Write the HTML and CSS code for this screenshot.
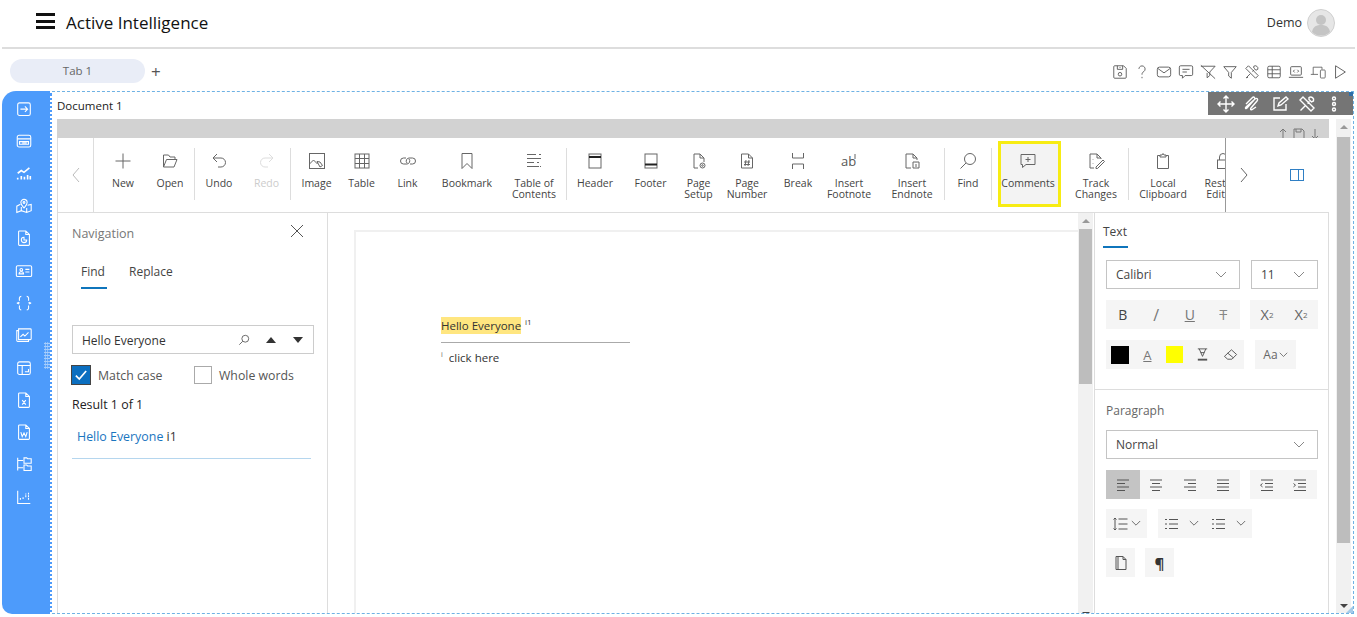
FILE: index.html
```html
<!DOCTYPE html>
<html lang="en">

<head>
    <meta charset="UTF-8">
    <meta name="viewport" content="width=device-width, initial-scale=1.0">
    <title>Active Intelligence - Document 1</title>
    <link rel="stylesheet" href="styles.css">
</head>

<body>
    <header class="app-header">
        <div class="menu-icon"><span></span><span></span><span></span></div>
        <div class="app-title">Active Intelligence</div>
        <div class="user-box">
            <span>Demo</span>
            <svg class="avatar" viewBox="0 0 28 28"><circle cx="14" cy="14" r="13.5" fill="#e6e6e6" stroke="#cfcfcf"/><circle cx="14" cy="11" r="5" fill="#c4c4c4" stroke="none"/><path d="M5 23c1-6 5-7 9-7s8 1 9 7a13 13 0 0 1-18 0z" fill="#c4c4c4" stroke="none"/></svg>
        </div>
    </header>

    <div class="tab-row">
        <div class="tab-pill">Tab 1</div>
        <div class="tab-add">+</div>
        <div class="page-tools">
            <svg viewBox="0 0 18 18"><path d="M3 2h10l3 3v10a1 1 0 0 1-1 1H3a1 1 0 0 1-1-1V3a1 1 0 0 1 1-1z"/><path d="M6 2v4h6V2M9 3.500v1"/><circle cx="9" cy="11.500" r="2"/></svg>
            <svg viewBox="0 0 18 18"><path d="M5.500 5.500a3.500 3.500 0 1 1 5.500 3c-1.500 1-2 1.700-2 3.500M9 14.500v1.500"/></svg>
            <svg viewBox="0 0 18 18"><rect x="1.500" y="3.500" width="15" height="11" rx="2.500"/><path d="M2 5l7 5 7-5"/></svg>
            <svg viewBox="0 0 18 18"><path d="M3 2h12a1.500 1.500 0 0 1 1.500 1.500v8A1.500 1.500 0 0 1 15 13H8l-3 3v-3H3a1.500 1.500 0 0 1-1.500-1.500v-8A1.500 1.500 0 0 1 3 2z"/><path d="M5 6h8M5 9h5"/></svg>
            <svg viewBox="0 0 18 18"><path d="M1 2.500h16l-6 6.500v4l-3 2.500V10M1 1.500l16 15"/></svg>
            <svg viewBox="0 0 18 18"><path d="M2 3h14l-5.500 6.500V16l-3-2.500v-4z"/></svg>
            <svg viewBox="0 0 18 18"><path d="M2 5l3-3 11 11-3 3zM11 2.500a3 3 0 0 1 4.500 3.500l-2 1-2.500-2.500zM2.500 15.500l4.500-4.500M2.500 15.500l2-.5M9.500 8.500l2-2"/></svg>
            <svg viewBox="0 0 18 18"><rect x="2" y="2.500" width="14" height="13" rx="1.500"/><path d="M2 6.500h14M2 11h14M7 2.500v13"/></svg>
            <svg viewBox="0 0 18 18"><rect x="3" y="3" width="12" height="9.500" rx="1"/><path d="M1 15h16M7.500 6.500l-1.500 1.500 1.500 1.500M10.500 6.500l1.500 1.500-1.500 1.500"/></svg>
            <svg viewBox="0 0 20 18"><path d="M1 12h9M4 12V3h11v3"/><rect x="13" y="6.500" width="6" height="10" rx="1"/></svg>
            <svg viewBox="0 0 18 18"><path d="M4 2l11 7-11 7z"/></svg>
        </div>
    </div>

    <div class="workspace">
        <nav class="side-nav">
            <svg viewBox="0 0 20 20"><rect x="3" y="3" width="14" height="14" rx="2"/><path d="M6 10h8M11 7l3 3-3 3"/></svg>
            <svg viewBox="0 0 20 20"><rect x="2.500" y="3.500" width="15" height="13" rx="2"/><path d="M2.500 7.500h15M5 10.500h10v3H5zM8 12h5"/></svg>
            <svg viewBox="0 0 20 20"><path d="M3 9l4-3 3 2 6-5M3 16v-2M7 16v-4M10.500 16v-3M14 16v-5M17 16v-4" stroke-width="1.800"/></svg>
            <svg viewBox="0 0 20 20"><path d="M6 8l-4 2v7l5-2 6 2 5-2V8l-4 1M10 12c-2-2.500-3.500-4-3.500-6a3.500 3.500 0 0 1 7 0c0 2-1.500 3.500-3.500 6zM7 15v-4M13 17v-5"/><circle cx="10" cy="6" r="1"/></svg>
            <svg viewBox="0 0 20 20"><path d="M5 2h7l4 4v11a1 1 0 0 1-1 1H5a1 1 0 0 1-1-1V3a1 1 0 0 1 1-1zM12 2v4h4"/><path d="M13 12a3 3 0 1 1-3-3v3z"/></svg>
            <svg viewBox="0 0 20 20"><rect x="1.500" y="4" width="17" height="12" rx="1.500"/><circle cx="7" cy="8.500" r="1.500"/><path d="M4.500 13c0-3 5-3 5 0zM11.500 8h4.500M11.500 11h4.500"/></svg>
            <svg viewBox="0 0 20 20"><path d="M7 2.500c-3 0-2 3.500-2 5.500s-3 2-3 2 3 0 3 2-1 5.500 2 5.500M13 2.500c3 0 2 3.500 2 5.500s3 2 3 2-3 0-3 2 1 5.500-2 5.500" stroke-dasharray="6 1.500"/></svg>
            <svg viewBox="0 0 20 20"><path d="M4 3h13a1 1 0 0 1 1 1v10a1 1 0 0 1-1 1H4zM4 5H2v11a1 1 0 0 0 1 1h12v-2M6 12l3-3 2 2 4-4"/></svg>
            <svg viewBox="0 0 20 20"><rect x="3" y="3" width="14" height="14" rx="2"/><path d="M3 7h14M8 7v10M11 14h4v-3"/></svg>
            <svg viewBox="0 0 20 20"><path d="M5 2h7l4 4v11a1 1 0 0 1-1 1H5a1 1 0 0 1-1-1V3a1 1 0 0 1 1-1zM12 2v4h4M8 10l4 5M12 10l-4 5"/></svg>
            <svg viewBox="0 0 20 20"><path d="M5 2h7l4 4v11a1 1 0 0 1-1 1H5a1 1 0 0 1-1-1V3a1 1 0 0 1 1-1zM12 2v4h4M6.500 10l1.500 5 2-4 2 4 1.500-5"/></svg>
            <svg viewBox="0 0 20 20"><path d="M3 3v14M3 6h6M3 14h6M10 3h3l1 1h4v5h-8zM10 11h3l1 1h4v5h-8z"/></svg>
            <svg viewBox="0 0 20 20"><path d="M3 3v14h14"/><path d="M6 13v-2M9 12V9M12 10V6M15 13V4" stroke-dasharray="2 1"/></svg>
        </nav>

        <section class="widget">
            <div class="widget-title">Document 1</div>
            <div class="widget-body">
                <div class="editor">
                    <div class="grey-bar">
                        <svg viewBox="0 0 14 14"><path d="M7 12V2M4 5l3-3 3 3M2 13h10"/></svg>
                        <svg viewBox="0 0 14 14"><path d="M2 2h8l2 2v8H2zM4 2v3h5V2"/></svg>
                        <svg viewBox="0 0 14 14"><path d="M7 2v10M4 9l3 3 3-3M2 13h10"/></svg>
                    </div>

                    <div class="ribbon">
                        <div class="ribbon-prev"><svg viewBox="0 0 12 18"><path d="M9 2L3 9l6 7"/></svg></div>
                        <div class="ribbon-items">
                            <div class="rb rb-new"><svg viewBox="0 0 18 18"><path d="M9 1.500v15M1.500 9h15"/></svg><span>New</span></div>
                            <div class="rb rb-open"><svg viewBox="0 0 18 18"><path d="M2.500 15V3h5l1.500 2h5v2.500M2.500 15l3-7.500h10.500l-3 7.500z"/></svg><span>Open</span></div>
                            <i class="rb-sep"></i>
                            <div class="rb rb-undo"><svg viewBox="0 0 18 18"><path d="M7 2L3 6l4 4M3 6h8a4.500 4.500 0 0 1 0 9H8"/></svg><span>Undo</span></div>
                            <div class="rb rb-redo off"><svg viewBox="0 0 18 18"><path d="M11 2l4 4-4 4M15 6H7a4.500 4.500 0 0 0 0 9h3"/></svg><span>Redo</span></div>
                            <i class="rb-sep"></i>
                            <div class="rb rb-image"><svg viewBox="0 0 18 18"><rect x="1.500" y="1.500" width="15" height="15"/><path d="M1.500 12l4-4 4 4M9 9.500l3 .5 2.500 3.500-2.500 1.500z"/></svg><span>Image</span></div>
                            <div class="rb rb-table"><svg viewBox="0 0 18 18"><rect x="2" y="2" width="14" height="14"/><path d="M2 6.500h14M2 11.500h14M6.500 2v14M11.500 2v14"/></svg><span>Table</span></div>
                            <div class="rb rb-link"><svg viewBox="0 0 18 18"><path d="M7 6H4.500a3 3 0 0 0 0 6H8a3 3 0 0 0 2-5M11 12h2.500a3 3 0 0 0 0-6H10a3 3 0 0 0-2 5"/></svg><span>Link</span></div>
                            <div class="rb rb-mark"><svg viewBox="0 0 18 18"><path d="M4 1.500h10v15l-5-5-5 5z"/></svg><span>Bookmark</span></div>
                            <div class="rb rb-toc"><svg viewBox="0 0 18 18"><path d="M2 2.500h9M14 2.500h2M2 6.500h14M2 10.500h7M12 10.500h2M2 14.500h12M15 14.500h1"/></svg><span>Table of Contents</span></div>
                            <i class="rb-sep"></i>
                            <div class="rb rb-header"><svg viewBox="0 0 18 18"><rect x="3" y="2" width="12" height="14"/><rect x="3" y="4" width="12" height="2" class="solid"/></svg><span>Header</span></div>
                            <div class="rb rb-footer"><svg viewBox="0 0 18 18"><rect x="3" y="2" width="12" height="14"/><rect x="3" y="11.500" width="12" height="2" class="solid"/></svg><span>Footer</span></div>
                            <div class="rb rb-setup"><svg viewBox="0 0 18 18"><path d="M8 16H4V2h6l4 4v4M10 2v4h4"/><circle cx="12.500" cy="13.500" r="2.500"/><circle cx="12.500" cy="13.500" r=".8"/></svg><span>Page Setup</span></div>
                            <div class="rb rb-number"><svg viewBox="0 0 18 18"><path d="M3.500 16V2h7l4 4v10zM10.500 2v4h4M8 8l-1 6M11 8l-1 6M6 10h6M6 12.500h6"/></svg><span>Page Number</span></div>
                            <div class="rb rb-break"><svg viewBox="0 0 18 18"><path d="M3.500 1v5h11V1M3.500 17v-5h11v5"/></svg><span>Break</span></div>
                            <div class="rb rb-foot"><svg viewBox="0 0 18 18"><text x="1" y="14" class="ico-text">ab</text><path d="M15 2v5"/></svg><span>Insert Footnote</span></div>
                            <div class="rb rb-end"><svg viewBox="0 0 18 18"><path d="M8 16H3V2h7l4 4v2M10 2v4h4M10 10h6v6h-6zM13 12v3M13 10.800v.2"/></svg><span>Insert Endnote</span></div>
                            <i class="rb-sep"></i>
                            <div class="rb rb-find"><svg viewBox="0 0 18 18"><circle cx="11" cy="7" r="5.500"/><path d="M7 11l-5.500 5.500"/></svg><span>Find</span></div>
                            <i class="rb-sep"></i>
                            <div class="rb rb-comments"><svg viewBox="0 0 18 18"><path d="M2 2.500h14v10H7l-3.500 3v-3H2zM9 5v5M6.500 7.500h5"/></svg><span>Comments</span></div>
                            <div class="rb rb-track"><svg viewBox="0 0 18 18"><path d="M7 16H3V2h7l4 4v1M10 2v4h4M6 7v.5M6 11v.5M9 15l7-7 1.500 1.500-7 7H9z"/></svg><span>Track Changes</span></div>
                            <i class="rb-sep"></i>
                            <div class="rb rb-clip"><svg viewBox="0 0 18 18"><path d="M6 3.500H3.500v13h11v-13H12M6 5V3h2l1-1.500L10 3h2v2z"/></svg><span>Local Clipboard</span></div>
                            <div class="rb rb-lock"><svg viewBox="0 0 18 18"><rect x="3.500" y="8" width="11" height="8.500"/><path d="M5.500 8V5a3.500 3.500 0 0 1 7 0v3"/></svg><span>Restrict Editing</span></div>
                        </div>
                        <div class="ribbon-next">
                            <svg class="next-arrow" viewBox="0 0 12 18"><path d="M3 2l6 7-6 7"/></svg>
                            <svg class="panel-toggle" viewBox="0 0 16 14"><rect x="1.500" y="1.500" width="13" height="11"/><path d="M9.500 1.500v11"/></svg>
                        </div>
                    </div>

                    <div class="editor-body">
                        <aside class="find-pane">
                            <div class="pane-head">
                                <span>Navigation</span>
                                <svg viewBox="0 0 14 14"><path d="M1 1l12 12M13 1L1 13"/></svg>
                            </div>
                            <div class="find-tabs">
                                <span class="active">Find</span>
                                <span>Replace</span>
                            </div>
                            <div class="find-input">
                                <span>Hello Everyone</span>
                                <svg class="find-glass" viewBox="0 0 14 14"><circle cx="8.500" cy="5.500" r="4"/><path d="M5.500 8.500L1.500 12.500"/></svg>
                                <i class="tri-up"></i>
                                <i class="tri-down"></i>
                            </div>
                            <div class="find-options">
                                <label class="opt">
                                    <span class="checkbox checked"><svg viewBox="0 0 14 14"><path d="M2.500 7.500l3 3 6-7"/></svg></span>
                                    Match case
                                </label>
                                <label class="opt">
                                    <span class="checkbox"></span>
                                    Whole words
                                </label>
                            </div>
                            <div class="find-count">Result 1 of 1</div>
                            <div class="find-result"><a>Hello Everyone</a> i1</div>
                        </aside>

                        <main class="doc-area">
                            <div class="doc-page">
                                <p class="doc-line"><mark>Hello Everyone</mark> <sup>i1</sup></p>
                                <hr class="note-rule">
                                <p class="doc-note"><sup>i</sup>click here</p>
                            </div>
                            <div class="doc-scroll">
                                <i class="arrow-up"></i>
                                <div class="doc-thumb"></div>
                                <i class="arrow-down"></i>
                            </div>
                        </main>

                        <aside class="props-pane">
                            <div class="props-text">
                                <div class="props-tab">Text</div>
                                <div class="tool-row select-row">
                                    <div class="select sel-font">Calibri<svg viewBox="0 0 12 8"><path d="M1 1l5 5 5-5"/></svg></div>
                                    <div class="select sel-size">11<svg viewBox="0 0 12 8"><path d="M1 1l5 5 5-5"/></svg></div>
                                </div>
                                <div class="tool-row">
                                    <div class="tools">
                                        <b class="tool t-b">B</b>
                                        <em class="tool t-b t-i">/</em>
                                        <u class="tool t-b t-u">U</u>
                                        <s class="tool t-b t-s">T</s>
                                    </div>
                                    <div class="tools">
                                        <span class="tool t-sc">X<sup>2</sup></span>
                                        <span class="tool t-sc">X<sub>2</sub></span>
                                    </div>
                                </div>
                                <div class="tool-row">
                                    <div class="tools">
                                        <span class="tool t-cell"><i class="swatch-black"></i></span>
                                        <span class="tool t-cell t-col"><u>A</u></span>
                                        <span class="tool t-cell"><i class="swatch-yellow"></i></span>
                                        <span class="tool t-cell"><svg viewBox="0 0 16 16"><path d="M3 2h10M4.500 2L8 10l3.500-8M6 6h4"/><path d="M3 13.500h10" stroke-width="2"/></svg></span>
                                        <span class="tool t-cell"><svg viewBox="0 0 16 16"><path d="M1.500 10L9 3l5.500 5-5 5H5zM5 6.500l6 5"/></svg></span>
                                    </div>
                                    <div class="tools tools-case">
                                        <span class="tool t-case">Aa<svg viewBox="0 0 12 8"><path d="M1 1l5 5 5-5"/></svg></span>
                                    </div>
                                </div>
                            </div>
                            <div class="props-para">
                                <div class="props-label">Paragraph</div>
                                <div class="select sel-style">Normal<svg viewBox="0 0 12 8"><path d="M1 1l5 5 5-5"/></svg></div>
                                <div class="tool-row">
                                    <div class="tools">
                                        <span class="tool on"><svg viewBox="0 0 16 16"><path d="M2 3h12M2 6.500h8M2 10h12M2 13.500h8"/></svg></span>
                                        <span class="tool"><svg viewBox="0 0 16 16"><path d="M2 3h12M4 6.500h8M2 10h12M4 13.500h8"/></svg></span>
                                        <span class="tool"><svg viewBox="0 0 16 16"><path d="M2 3h12M6 6.500h8M2 10h12M6 13.500h8"/></svg></span>
                                        <span class="tool"><svg viewBox="0 0 16 16"><path d="M2 3h12M2 6.500h12M2 10h12M2 13.500h12"/></svg></span>
                                    </div>
                                    <div class="tools">
                                        <span class="tool"><svg viewBox="0 0 16 16"><path d="M2 3h12M6 6.500h8M6 10h8M2 13.500h12M3.500 6.500L1.500 8.200l2 1.700"/></svg></span>
                                        <span class="tool"><svg viewBox="0 0 16 16"><path d="M2 3h12M6 6.500h8M6 10h8M2 13.500h12M1.500 6.500l2 1.700-2 1.700"/></svg></span>
                                    </div>
                                </div>
                                <div class="tool-row list-row">
                                    <div class="tools">
                                        <span class="tool t-wide"><svg viewBox="0 0 16 16"><path d="M3 2v12M1.500 3.500L3 2l1.500 1.500M1.500 12.500L3 14l1.500-1.500M6.500 3h9M6.500 8h9M6.500 13h9"/></svg><svg class="mini" viewBox="0 0 12 8"><path d="M1 1l5 5 5-5"/></svg></span>
                                    </div>
                                    <div class="tools">
                                        <span class="tool t-list"><svg viewBox="0 0 16 16"><path d="M5 3.500h9M5 8h9M5 12.500h9M1 3.500h2M1 8h2M1 12.500h2"/></svg><svg class="mini" viewBox="0 0 12 8"><path d="M1 1l5 5 5-5"/></svg></span>
                                        <span class="tool t-list"><svg viewBox="0 0 16 16"><path d="M5 3.500h9M5 8h9M5 12.500h9M1 3.500h2M1 8h2M1 12.500h2"/></svg><svg class="mini" viewBox="0 0 12 8"><path d="M1 1l5 5 5-5"/></svg></span>
                                    </div>
                                </div>
                                <div class="tool-row">
                                    <div class="tools"><span class="tool t-square"><svg viewBox="0 0 16 16"><path d="M3 1.500h7l3 3v10H3zM10 1.500v3h3M5 1.500v13"/></svg></span></div>
                                    <div class="tools"><span class="tool t-square t-para">¶</span></div>
                                </div>
                            </div>
                        </aside>
                    </div>
                </div>

                <div class="outer-scroll">
                    <i class="arrow-up"></i>
                    <div class="outer-thumb"></div>
                    <i class="arrow-down"></i>
                </div>
            </div>

            <!-- floating widget tools -->
            <div class="widget-tools">
                <svg viewBox="0 0 18 18"><path d="M9 1v16M1 9h16M6.500 3.500L9 1l2.500 2.500M6.500 14.500L9 17l2.500-2.500M3.500 6.500L1 9l2.500 2.500M14.500 6.500L17 9l-2.500 2.500"/></svg>
                <svg viewBox="0 0 18 18"><path d="M2 9l6-6c2-2 4 0 2 2l-7 8c-1.500 1.500-2 0-1-1l9-8c2-1.500 3.500 0 2 2l-6 7c-1 1.500 0 2.500 2 1l3-2"/></svg>
                <svg viewBox="0 0 18 18"><path d="M9 3H3v12h12V9M7 11l1-3 7-6 2 2-7 6z"/></svg>
                <svg viewBox="0 0 18 18"><path d="M2 5l3-3 11 11-3 3zM11 2.500a3 3 0 0 1 4.500 3.500l-2 1-2.500-2.500zM2.500 15.500l4.500-4.500M9.500 8.500l2-2"/></svg>
                <svg viewBox="0 0 18 18"><circle cx="9" cy="3.500" r="1.500"/><circle cx="9" cy="9" r="1.500"/><circle cx="9" cy="14.500" r="1.500"/></svg>
            </div>
            <i class="corner-mark"></i>
            <i class="resize-mark"></i>
        </section>

        <div class="drag-dots"></div>
    </div>
</body>

</html>
```

FILE: styles.css
```css
body {
    font-family: "Open Sans", sans-serif;
    margin: 0;
    padding: 0;
    width: 1357px;
    height: 617px;
    overflow: hidden;
    background-color: white;
    color: #333;
    font-size: 12px;
}

svg {
    fill: none;
    stroke: #555;
    stroke-width: 1;
}

/* header */
.app-header {
    display: flex;
    align-items: center;
    height: 49px;
    margin: 0 2px;
    padding: 0 20px 2px 34px;
    box-sizing: border-box;
    border-bottom: 2px solid #ddd;
}

.menu-icon {
    display: flex;
    flex-direction: column;
    justify-content: space-between;
    width: 19px;
    height: 16px;
    margin: 0 11px 3px 0;
}

.menu-icon span {
    display: block;
    height: 3px;
    background-color: #111;
}

.app-title {
    font-size: 17px;
    color: #111;
}

.user-box {
    display: flex;
    align-items: center;
    gap: 5px;
    margin-left: auto;
    font-size: 12.5px;
}

.avatar {
    width: 28px;
    height: 28px;
}

/* tabs */
.tab-row {
    display: flex;
    align-items: center;
    height: 42px;
    padding: 0 9px 0 10px;
}

.tab-pill {
    width: 135px;
    height: 24px;
    line-height: 23px;
    text-align: center;
    box-sizing: border-box;
    background-color: #e9edf7;
    border-radius: 12px;
    color: #666;
    margin-top: 2px;
    font-size: 11.5px;
}

.tab-add {
    margin-left: 6px;
    margin-top: 2px;
    font-size: 17px;
    color: #555;
}

.page-tools {
    display: flex;
    align-items: center;
    gap: 6px;
    margin-left: auto;
    margin-top: 3px;
}

.page-tools svg {
    width: 16px;
    height: 16px;
}

/* main area */
.workspace {
    position: relative;
    display: flex;
    height: 523px;
    margin: 0 3px 0 2px;
}

.side-nav {
    display: flex;
    flex-direction: column;
    align-items: center;
    width: 44px;
    padding: 2px 4px 0 0;
    flex-shrink: 0;
    background-color: #4d9bfb;
    border-right: 2px dotted white;
    border-radius: 14px 0 0 10px;
}

.side-nav svg {
    width: 18px;
    height: 18px;
    padding: 7.16px 0;
    stroke: white;
    stroke-width: 1.2;
}

.drag-dots {
    position: absolute;
    left: 42px;
    top: 251px;
    width: 6px;
    height: 27px;
    background-image: radial-gradient(#a6cdfb 1px, transparent 1px);
    background-size: 2.500px 3px;
}

.widget {
    position: relative;
    flex: 1;
    min-width: 0;
    box-sizing: border-box;
    padding-left: 5px;
    border-top: 1px dashed #6fb2e4;
    border-right: 1px dashed #6fb2e4;
    border-bottom: 1px dashed #6fb2e4;
}

.widget-title {
    height: 27px;
    line-height: 27px;
    font-size: 11.5px;
    color: #222;
}

.widget-body {
    display: flex;
    height: 494px;
}

.editor {
    width: 1272px;
    display: flex;
    flex-direction: column;
    flex-shrink: 0;
}

.grey-bar {
    display: flex;
    justify-content: flex-end;
    align-items: flex-start;
    gap: 2px;
    height: 19px;
    padding: 8px 7px 0 0;
    box-sizing: border-box;
    overflow: hidden;
    background-color: #d2d2d2;
}

.grey-bar svg {
    width: 14px;
    height: 14px;
    stroke: #777;
}

/* ribbon */
.ribbon {
    display: flex;
    height: 75px;
    box-sizing: border-box;
    border-bottom: 1px solid #ddd;
    border-left: 1px solid #ddd;
    flex-shrink: 0;
}

.ribbon-prev {
    display: flex;
    align-items: center;
    justify-content: center;
    width: 35px;
    flex-shrink: 0;
    border-right: 1px solid #ddd;
}

.ribbon-prev svg {
    width: 12px;
    height: 18px;
    stroke: #bbb;
}

.ribbon-items {
    display: flex;
    flex: 1;
    min-width: 0;
    overflow: hidden;
    padding-left: 6px;
}

.ribbon-next {
    display: flex;
    align-items: center;
    width: 103px;
    flex-shrink: 0;
    border-left: 1px solid #999;
}

.next-arrow {
    width: 12px;
    height: 18px;
    margin-left: 12px;
    stroke: #666;
}

.panel-toggle {
    width: 16px;
    height: 14px;
    margin-left: 39px;
    stroke: #2f7fc4;
}

.rb {
    display: flex;
    flex-direction: column;
    align-items: center;
    flex-shrink: 0;
    padding-top: 14px;
    box-sizing: border-box;
    text-align: center;
    font-size: 10.5px;
    line-height: 11px;
    color: #444;
}

.rb svg {
    width: 18px;
    height: 18px;
    margin-bottom: 8px;
    stroke: #666;
}

.rb.off,
.rb.off svg {
    color: #ccc;
    stroke: #ddd;
}

.rb-sep {
    display: block;
    width: 1px;
    height: 52px;
    margin-top: 10px;
    flex-shrink: 0;
    background-color: #ddd;
}

.solid {
    fill: #222;
    stroke: none;
}

.ico-text {
    font-family: "Open Sans", sans-serif;
    font-size: 13px;
    fill: #555;
    stroke: none;
}

.rb-new { width: 46px; }
.rb-open { width: 48px; }
.rb-undo { width: 48px; }
.rb-redo { width: 47px; }
.rb-image { width: 49px; padding-left: 2px; }
.rb-table { width: 43px; }
.rb-link { width: 49px; }
.rb-mark { width: 70px; }
.rb-toc { width: 64px; }
.rb-header { width: 56px; }
.rb-footer { width: 55px; }
.rb-setup { width: 41px; }
.rb-number { width: 56px; }
.rb-break { width: 46px; }
.rb-foot { width: 56px; }
.rb-end { width: 67px; padding-left: 3px; }
.rb-find { width: 46px; }
.rb-track { width: 64px; margin-left: 3px; }
.rb-clip { width: 68px; }
.rb-lock { width: 52px; }

.rb-comments {
    width: 63px;
    height: 66px;
    margin: 3px 0 0 6px;
    padding: 8px 3px 0 0;
    border: 3px solid #f7ec13;
    background-color: #f3f3f3;
}

/* editor body */
.editor-body {
    display: flex;
    flex: 1;
    min-height: 0;
    border-left: 1px solid #ddd;
}

.find-pane {
    width: 255px;
    padding: 0 0 0 14px;
    flex-shrink: 0;
    border-right: 1px solid #ddd;
}

.pane-head {
    display: flex;
    justify-content: space-between;
    align-items: center;
    width: 232px;
    height: 40px;
    font-size: 12.5px;
    color: #777;
}

.pane-head svg {
    width: 14px;
    height: 14px;
    margin-bottom: 4px;
}

.find-tabs {
    display: flex;
    gap: 22px;
    margin: 0 0 36px 9px;
    font-size: 12px;
    color: #444;
}

.find-tabs span {
    height: 36px;
    padding-top: 10px;
    box-sizing: border-box;
}

.find-tabs .active {
    width: 26px;
    border-bottom: 2px solid #0f75bc;
}

.find-input {
    display: flex;
    align-items: center;
    width: 242px;
    height: 29px;
    box-sizing: border-box;
    padding: 2px 10px 0 9px;
    border: 1px solid #ccc;
    color: #333;
}

.find-glass {
    width: 12px;
    height: 12px;
    margin-left: auto;
    margin-right: 16px;
    margin-bottom: 2px;
}

.tri-up,
.tri-down {
    display: block;
    width: 0;
    height: 0;
    margin-bottom: 2px;
    border-left: 5px solid transparent;
    border-right: 5px solid transparent;
}

.tri-up {
    border-bottom: 6px solid #333;
    margin-right: 17px;
}

.tri-down {
    border-top: 6px solid #333;
}

.find-options {
    display: flex;
    margin: 11px 0 0 -1px;
    color: #555;
    font-size: 12.3px;
}

.opt {
    display: flex;
    align-items: center;
    gap: 7px;
    width: 123px;
}

.checkbox {
    display: block;
    width: 18px;
    height: 18px;
    box-sizing: border-box;
    border: 1px solid #aaa;
}

.checkbox.checked {
    width: 20px;
    height: 20px;
    padding: 1px;
    background-color: #0b6fc0;
    border: 1px solid #444;
}

.checkbox svg {
    display: block;
    width: 16px;
    height: 16px;
    stroke: white;
    stroke-width: 1.5;
}

.find-count {
    margin-top: 11px;
    line-height: 17px;
    font-size: 12.4px;
    color: #222;
}

.find-result {
    width: 234px;
    margin-top: 15px;
    padding: 0 0 13px 5px;
    line-height: 17px;
    font-size: 12.4px;
    border-bottom: 1px solid #b5d6ee;
}

.find-result a {
    color: #1a76bf;
}

/* document */
.doc-area {
    display: flex;
    width: 766px;
    flex-shrink: 0;
    box-sizing: border-box;
}

.doc-page {
    flex: 1;
    margin: 17px 0 0 26px;
    padding: 85px 0 0 85px;
    border-top: 2px solid #f0f0f0;
    border-left: 2px solid #f0f0f0;
}

.doc-line {
    margin: 0;
    line-height: 17px;
    font-size: 11.5px;
}

.doc-line mark {
    display: inline-block;
    width: 80px;
    white-space: nowrap;
    background-color: #ffe680;
    color: #333;
}

.doc-line sup {
    font-size: 8px;
    line-height: 0;
    margin-left: 1px;
}

.note-rule {
    width: 189px;
    height: 1px;
    margin: 8px 0 0 0;
    border: none;
    background-color: #aaa;
}

.doc-note {
    margin: 6px 0 0 0;
    font-size: 11.5px;
    line-height: 17px;
}

.doc-note sup {
    font-size: 7px;
    line-height: 0;
    margin-right: 6px;
    color: #666;
}

.doc-scroll,
.outer-scroll {
    display: flex;
    flex-direction: column;
    align-items: center;
    overflow: hidden;
    background-color: #f1f1f1;
}

.doc-scroll {
    width: 15px;
    flex-shrink: 0;
    margin-right: 1px;
}

.outer-scroll {
    width: 15px;
    margin-left: 7px;
}

.doc-thumb {
    width: 13px;
    height: 155px;
    margin-top: 6px;
    background-color: #bdbdbd;
}

.outer-thumb {
    width: 13px;
    height: 406px;
    margin-top: 8px;
    background-color: #bdbdbd;
}

.arrow-up,
.arrow-down {
    display: block;
    width: 0;
    height: 0;
    border-left: 4px solid transparent;
    border-right: 4px solid transparent;
}

.arrow-up {
    margin-top: 6px;
    border-bottom: 4px solid #999;
}

.arrow-down {
    margin-top: auto;
    margin-bottom: 5px;
    border-top: 4px solid #444;
}

.doc-scroll .arrow-down {
    margin-bottom: -3px;
}

/* text and paragraph properties */
.props-pane {
    width: 235px;
    flex-shrink: 0;
    box-sizing: border-box;
    border-left: 1px solid #ddd;
    border-right: 1px solid #ddd;
    color: #444;
}

.props-text {
    height: 177px;
    box-sizing: border-box;
    padding: 10px 0 0 11px;
    border-bottom: 1px solid #ddd;
}

.props-tab {
    width: 25px;
    height: 25px;
    margin-left: -3px;
    box-sizing: border-box;
    border-bottom: 2px solid #0f75bc;
}

.tool-row {
    display: flex;
    gap: 10px;
    margin-top: 11px;
}

.select-row {
    gap: 11px;
    margin-top: 12px;
}

.select {
    display: flex;
    align-items: center;
    justify-content: space-between;
    height: 29px;
    box-sizing: border-box;
    padding: 0 12px 0 9px;
    border: 1px solid #c4c4c4;
}

.select svg {
    width: 12px;
    height: 8px;
    stroke: #888;
}

.sel-font { width: 134px; }
.sel-size { width: 67px; }

.sel-style {
    width: 212px;
    margin-top: 11px;
}

.tools {
    display: flex;
    height: 29px;
    background-color: #f5f5f5;
}

.tools-case {
    margin-left: 1px;
}

.tool {
    display: flex;
    align-items: center;
    justify-content: center;
    width: 33.500px;
    height: 29px;
    text-decoration: none;
    font-style: normal;
    font-weight: normal;
}

.tool svg {
    width: 16px;
    height: 16px;
}

.tool svg.mini {
    width: 10px;
    height: 7px;
    margin-left: 9px;
}

.tool.on {
    background-color: #c4c4c4;
}

.t-b {
    font-size: 14px;
    color: #444;
}

.t-i {
    font-size: 16px;
    color: #777;
}

.t-u {
    text-decoration: underline;
    color: #777;
}

.t-s {
    text-decoration: line-through;
    color: #888;
}

.t-sc {
    width: 34px;
    font-size: 14.500px;
    color: #666;
}

.t-sc sup,
.t-sc sub {
    font-size: 8px;
    line-height: 0;
}

.t-cell {
    width: 27.600px;
}

.t-cell svg {
    width: 15px;
    height: 15px;
}

.swatch-black {
    display: block;
    width: 18px;
    height: 18px;
    background-color: black;
}

.swatch-yellow {
    display: block;
    width: 17px;
    height: 17px;
    background-color: yellow;
}

.t-col {
    font-size: 13px;
    color: #777;
}

.t-case {
    width: 41px;
    font-size: 12px;
    color: #666;
}

.t-case svg {
    width: 9px;
    height: 6px;
    margin-left: 1px;
}

.t-wide {
    width: 41px;
}

.t-wide svg.mini {
    margin-left: 3px;
}

.t-list {
    width: 47px;
}

.t-square {
    width: 29px;
}

.t-para {
    font-size: 15px;
    font-weight: bold;
    color: #333;
}

.props-para {
    padding: 12px 0 0 11px;
}

.props-para .tool-row {
    margin-top: 10px;
}

.props-para .sel-style + .tool-row {
    margin-top: 11px;
}

.props-para .list-row {
    gap: 11px;
}

.props-label {
    color: #666;
    line-height: 17px;
}

/* overlays on the widget */
.widget-tools {
    position: absolute;
    top: 0;
    right: 0;
    display: flex;
    align-items: center;
    gap: 9px;
    width: 145px;
    height: 23px;
    box-sizing: border-box;
    padding-left: 9px;
    background-color: #757575;
}

.widget-tools svg {
    width: 18px;
    height: 18px;
    stroke: white;
    stroke-width: 1.4;
}

.corner-mark {
    position: absolute;
    top: 0;
    right: 0;
    width: 4px;
    height: 4px;
    background-color: #2f6fa8;
}

.resize-mark {
    position: absolute;
    right: 0;
    bottom: 0;
    width: 0;
    height: 0;
    border-left: 7px solid transparent;
    border-bottom: 7px solid #a6cbe8;
}
```
